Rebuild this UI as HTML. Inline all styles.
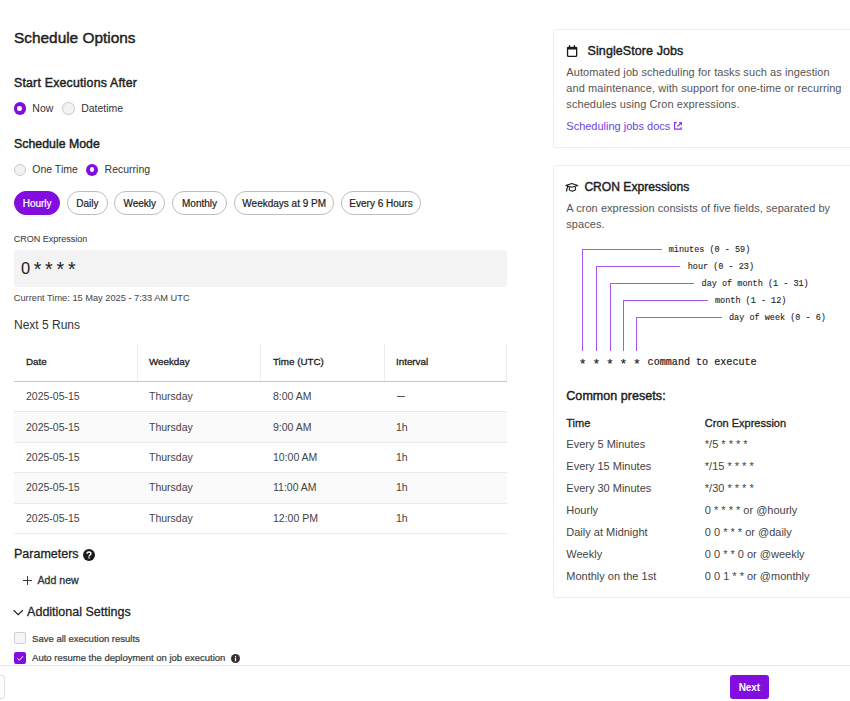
<!DOCTYPE html>
<html><head><meta charset="utf-8"><style>
html,body{margin:0;padding:0;background:#fff;width:850px;height:701px;overflow:hidden;}
body{position:relative;font-family:'Liberation Sans',sans-serif;}
.t{position:absolute;white-space:pre;line-height:1;}
.r{position:absolute;}
.chip{position:absolute;top:191.2px;height:23.8px;box-sizing:border-box;border:1px solid #bdbdbd;border-radius:12px;background:#fff;color:#1b1b1b;font:400 10px/24px 'Liberation Sans';text-align:center;-webkit-text-stroke:0.2px #1b1b1b;}
.chip.on{background:#820ddf;border-color:#820ddf;color:#fff;-webkit-text-stroke:0.2px #fff;}
</style></head><body>
<div class="t" style="left:14px;top:30.46px;font-size:15.4px;font-weight:400;color:#1f1f1f;letter-spacing:0px;font-family:'Liberation Sans';-webkit-text-stroke:0.45px #1f1f1f;">Schedule Options</div>
<div class="t" style="left:14px;top:77.49px;font-size:12.3px;font-weight:400;color:#1f1f1f;letter-spacing:0.22px;font-family:'Liberation Sans';-webkit-text-stroke:0.45px #1f1f1f;">Start Executions After</div>
<div class="r" style="left:13.5px;top:102.3px;width:12.4px;height:12.4px;border-radius:50%;background:#820ddf;"></div>
<div class="r" style="left:17.4px;top:106.2px;width:4.6px;height:4.6px;border-radius:50%;background:#fff;"></div>
<div class="t" style="left:32.3px;top:102.91px;font-size:10.5px;font-weight:400;color:#333;letter-spacing:0px;font-family:'Liberation Sans';">Now</div>
<div class="r" style="left:62.3px;top:102.3px;width:12.4px;height:12.4px;border-radius:50%;background:#f2f2f2;box-sizing:border-box;border:1px solid #cacaca;"></div>
<div class="t" style="left:81.2px;top:102.91px;font-size:10.5px;font-weight:400;color:#333;letter-spacing:0px;font-family:'Liberation Sans';">Datetime</div>
<div class="t" style="left:14px;top:138.39px;font-size:12.3px;font-weight:400;color:#1f1f1f;letter-spacing:0.03px;font-family:'Liberation Sans';-webkit-text-stroke:0.45px #1f1f1f;">Schedule Mode</div>
<div class="r" style="left:13.600000000000001px;top:163.5px;width:12.4px;height:12.4px;border-radius:50%;background:#f2f2f2;box-sizing:border-box;border:1px solid #cacaca;"></div>
<div class="t" style="left:32.3px;top:164.41px;font-size:10.5px;font-weight:400;color:#333;letter-spacing:0px;font-family:'Liberation Sans';">One Time</div>
<div class="r" style="left:85.89999999999999px;top:163.5px;width:12.4px;height:12.4px;border-radius:50%;background:#820ddf;"></div>
<div class="r" style="left:89.8px;top:167.39999999999998px;width:4.6px;height:4.6px;border-radius:50%;background:#fff;"></div>
<div class="t" style="left:104.6px;top:164.41px;font-size:10.5px;font-weight:400;color:#333;letter-spacing:0px;font-family:'Liberation Sans';">Recurring</div>
<div class="chip on" style="left:13.8px;width:46.7px;">Hourly</div>
<div class="chip" style="left:67px;width:40.6px;">Daily</div>
<div class="chip" style="left:114.4px;width:50.8px;">Weekly</div>
<div class="chip" style="left:171.8px;width:55.5px;">Monthly</div>
<div class="chip" style="left:233.9px;width:100.6px;">Weekdays at 9 PM</div>
<div class="chip" style="left:340.7px;width:80.7px;">Every 6 Hours</div>
<div class="t" style="left:13.8px;top:235.18px;font-size:9px;font-weight:400;color:#444;letter-spacing:0px;font-family:'Liberation Sans';-webkit-text-stroke:0.08px #444;">CRON Expression</div>
<div class="r" style="left:13.8px;top:250.2px;width:493.2px;height:36.8px;background:#f3f3f3;border-radius:3px;"></div>
<div class="t" style="left:20.9px;top:260.03px;font-size:16.5px;font-weight:400;color:#222;letter-spacing:0px;font-family:'Liberation Sans';">0</div>
<div class="t" style="left:33.8px;top:259.79px;font-size:19.5px;font-weight:400;color:#222;letter-spacing:0px;font-family:'Liberation Sans';">*</div>
<div class="t" style="left:45.1px;top:259.79px;font-size:19.5px;font-weight:400;color:#222;letter-spacing:0px;font-family:'Liberation Sans';">*</div>
<div class="t" style="left:56.4px;top:259.79px;font-size:19.5px;font-weight:400;color:#222;letter-spacing:0px;font-family:'Liberation Sans';">*</div>
<div class="t" style="left:68.0px;top:259.79px;font-size:19.5px;font-weight:400;color:#222;letter-spacing:0px;font-family:'Liberation Sans';">*</div>
<div class="t" style="left:13.8px;top:293.67px;font-size:9.25px;font-weight:400;color:#4a4a4a;letter-spacing:0px;font-family:'Liberation Sans';-webkit-text-stroke:0.05px #4a4a4a;">Current Time: 15 May 2025 - 7:33 AM UTC</div>
<div class="t" style="left:14px;top:318.64px;font-size:12px;font-weight:400;color:#333;letter-spacing:0px;font-family:'Liberation Sans';">Next 5 Runs</div>
<div class="r" style="left:13.8px;top:343.5px;width:493.2px;height:37.5px;background:#fff;"></div>
<div class="r" style="left:137px;top:343.5px;width:1px;height:37.5px;background:#ececec;"></div>
<div class="r" style="left:260px;top:343.5px;width:1px;height:37.5px;background:#ececec;"></div>
<div class="r" style="left:384px;top:343.5px;width:1px;height:37.5px;background:#ececec;"></div>
<div class="r" style="left:506px;top:343.5px;width:1px;height:37.5px;background:#ececec;"></div>
<div class="r" style="left:13.8px;top:380.6px;width:493.2px;height:1.5px;background:#c3c4d2;"></div>
<div class="t" style="left:26px;top:357.10px;font-size:9.8px;font-weight:400;color:#222;letter-spacing:0px;font-family:'Liberation Sans';-webkit-text-stroke:0.3px #222;">Date</div>
<div class="t" style="left:149px;top:357.10px;font-size:9.8px;font-weight:400;color:#222;letter-spacing:0px;font-family:'Liberation Sans';-webkit-text-stroke:0.3px #222;">Weekday</div>
<div class="t" style="left:273px;top:357.10px;font-size:9.8px;font-weight:400;color:#222;letter-spacing:0px;font-family:'Liberation Sans';-webkit-text-stroke:0.3px #222;">Time (UTC)</div>
<div class="t" style="left:396px;top:357.10px;font-size:9.8px;font-weight:400;color:#222;letter-spacing:0px;font-family:'Liberation Sans';-webkit-text-stroke:0.3px #222;">Interval</div>
<div class="r" style="left:13.8px;top:411.4px;width:493.2px;height:1px;background:#e9e9ee;"></div>
<div class="t" style="left:26px;top:391.11px;font-size:10.5px;font-weight:400;color:#444;letter-spacing:0px;font-family:'Liberation Sans';">2025-05-15</div>
<div class="t" style="left:149px;top:391.11px;font-size:10.5px;font-weight:400;color:#444;letter-spacing:0px;font-family:'Liberation Sans';">Thursday</div>
<div class="t" style="left:273px;top:391.11px;font-size:10.5px;font-weight:400;color:#444;letter-spacing:0px;font-family:'Liberation Sans';">8:00 AM</div>
<div class="t" style="left:396px;top:391.11px;font-size:10.5px;font-weight:400;color:#444;letter-spacing:0px;font-family:'Liberation Sans';"></div>
<div class="r" style="left:13.8px;top:412.4px;width:493.2px;height:30.4px;background:#fafafa;"></div>
<div class="r" style="left:13.8px;top:441.79999999999995px;width:493.2px;height:1px;background:#e9e9ee;"></div>
<div class="t" style="left:26px;top:421.51px;font-size:10.5px;font-weight:400;color:#444;letter-spacing:0px;font-family:'Liberation Sans';">2025-05-15</div>
<div class="t" style="left:149px;top:421.51px;font-size:10.5px;font-weight:400;color:#444;letter-spacing:0px;font-family:'Liberation Sans';">Thursday</div>
<div class="t" style="left:273px;top:421.51px;font-size:10.5px;font-weight:400;color:#444;letter-spacing:0px;font-family:'Liberation Sans';">9:00 AM</div>
<div class="t" style="left:396px;top:421.51px;font-size:10.5px;font-weight:400;color:#444;letter-spacing:0px;font-family:'Liberation Sans';">1h</div>
<div class="r" style="left:13.8px;top:472.2px;width:493.2px;height:1px;background:#e9e9ee;"></div>
<div class="t" style="left:26px;top:451.91px;font-size:10.5px;font-weight:400;color:#444;letter-spacing:0px;font-family:'Liberation Sans';">2025-05-15</div>
<div class="t" style="left:149px;top:451.91px;font-size:10.5px;font-weight:400;color:#444;letter-spacing:0px;font-family:'Liberation Sans';">Thursday</div>
<div class="t" style="left:273px;top:451.91px;font-size:10.5px;font-weight:400;color:#444;letter-spacing:0px;font-family:'Liberation Sans';">10:00 AM</div>
<div class="t" style="left:396px;top:451.91px;font-size:10.5px;font-weight:400;color:#444;letter-spacing:0px;font-family:'Liberation Sans';">1h</div>
<div class="r" style="left:13.8px;top:473.2px;width:493.2px;height:30.4px;background:#fafafa;"></div>
<div class="r" style="left:13.8px;top:502.59999999999997px;width:493.2px;height:1px;background:#e9e9ee;"></div>
<div class="t" style="left:26px;top:482.31px;font-size:10.5px;font-weight:400;color:#444;letter-spacing:0px;font-family:'Liberation Sans';">2025-05-15</div>
<div class="t" style="left:149px;top:482.31px;font-size:10.5px;font-weight:400;color:#444;letter-spacing:0px;font-family:'Liberation Sans';">Thursday</div>
<div class="t" style="left:273px;top:482.31px;font-size:10.5px;font-weight:400;color:#444;letter-spacing:0px;font-family:'Liberation Sans';">11:00 AM</div>
<div class="t" style="left:396px;top:482.31px;font-size:10.5px;font-weight:400;color:#444;letter-spacing:0px;font-family:'Liberation Sans';">1h</div>
<div class="r" style="left:13.8px;top:533.0px;width:493.2px;height:1px;background:#e9e9ee;"></div>
<div class="t" style="left:26px;top:512.71px;font-size:10.5px;font-weight:400;color:#444;letter-spacing:0px;font-family:'Liberation Sans';">2025-05-15</div>
<div class="t" style="left:149px;top:512.71px;font-size:10.5px;font-weight:400;color:#444;letter-spacing:0px;font-family:'Liberation Sans';">Thursday</div>
<div class="t" style="left:273px;top:512.71px;font-size:10.5px;font-weight:400;color:#444;letter-spacing:0px;font-family:'Liberation Sans';">12:00 PM</div>
<div class="t" style="left:396px;top:512.71px;font-size:10.5px;font-weight:400;color:#444;letter-spacing:0px;font-family:'Liberation Sans';">1h</div>
<div class="r" style="left:396.5px;top:396px;width:8px;height:1.1px;background:#555;"></div>
<div class="t" style="left:14px;top:547.62px;font-size:12.5px;font-weight:400;color:#1f1f1f;letter-spacing:0px;font-family:'Liberation Sans';-webkit-text-stroke:0.3px #1f1f1f;">Parameters</div>
<svg class="r" style="left:83.3px;top:548.7px;" width="12" height="12" viewBox="0 0 12 12"><circle cx="6" cy="6" r="6" fill="#1b1b1b"/><path d="M4.05 4.7 Q4.05 3 6 3 Q7.95 3 7.95 4.6 Q7.95 5.6 6.9 6.1 Q6.05 6.5 6.05 7.4" stroke="#fff" stroke-width="1.35" fill="none"/><rect x="5.35" y="8.1" width="1.4" height="1.35" fill="#fff"/></svg>
<div class="r" style="left:23px;top:580px;width:8.7px;height:1.2px;background:#3a3a3a;"></div>
<div class="r" style="left:27px;top:576.4px;width:1.2px;height:8.3px;background:#3a3a3a;"></div>
<div class="t" style="left:37.5px;top:575.43px;font-size:10.6px;font-weight:400;color:#333;letter-spacing:0px;font-family:'Liberation Sans';-webkit-text-stroke:0.3px #333;">Add new</div>
<svg class="r" style="left:13px;top:606px;" width="11" height="11" viewBox="0 0 11 11"><path d="M0.6 4.1 L5.2 8.7 L9.8 4.1" fill="none" stroke="#1b1b1b" stroke-width="1.3"/></svg>
<div class="t" style="left:27.1px;top:605.92px;font-size:12.5px;font-weight:400;color:#1f1f1f;letter-spacing:0px;font-family:'Liberation Sans';-webkit-text-stroke:0.3px #1f1f1f;">Additional Settings</div>
<div class="r" style="left:13.7px;top:631.9px;width:12.2px;height:11.8px;box-sizing:border-box;border:1px solid #cfcfcf;background:#f5f5f5;border-radius:2px;"></div>
<div class="t" style="left:32.1px;top:633.66px;font-size:9.5px;font-weight:400;color:#3a3a3a;letter-spacing:0px;font-family:'Liberation Sans';-webkit-text-stroke:0.22px #3a3a3a;">Save all execution results</div>
<div class="r" style="left:13.7px;top:651.6px;width:12.2px;height:12px;background:#820ddf;border-radius:2px;"></div>
<svg class="r" style="left:13.7px;top:651.6px;" width="12.2" height="12" viewBox="0 0 12 12"><path d="M3.3 6.3 L5.3 8.2 L8.9 4.2" fill="none" stroke="#fff" stroke-width="1"/></svg>
<div class="t" style="left:32.1px;top:652.86px;font-size:9.5px;font-weight:400;color:#3a3a3a;letter-spacing:0px;font-family:'Liberation Sans';-webkit-text-stroke:0.22px #3a3a3a;">Auto resume the deployment on job execution</div>
<svg class="r" style="left:230.7px;top:653.9px;" width="9" height="9" viewBox="0 0 9 9"><circle cx="4.5" cy="4.5" r="4.5" fill="#333"/><rect x="3.9" y="3.6" width="1.2" height="3.6" fill="#fff"/><rect x="3.9" y="1.9" width="1.2" height="1.1" fill="#fff"/></svg>
<div class="r" style="left:0px;top:665px;width:850px;height:1px;background:#e6e6e6;"></div>
<div class="r" style="left:-20px;top:675.2px;width:25px;height:23.5px;box-sizing:border-box;border:1px solid #dedede;border-radius:3px;background:#fff;"></div>
<div class="r" style="left:730.1px;top:674.9px;width:38.6px;height:23.8px;background:#820ddf;border-radius:3px;color:#fff;font:700 10px/25.6px 'Liberation Sans';letter-spacing:-0.1px;text-align:center;">Next</div>
<div class="r" style="left:553px;top:29px;width:320px;height:118.5px;box-sizing:border-box;border:1px solid #ececec;border-radius:3px;background:#fff;"></div>
<svg class="r" style="left:566px;top:44px;" width="12" height="14" viewBox="0 0 12 14"><rect x="1.55" y="3.45" width="9.1" height="9" rx="0.9" fill="none" stroke="#1b1b1b" stroke-width="1.3"/><rect x="1" y="2.9" width="10.2" height="2.6" rx="0.8" fill="#1b1b1b"/><rect x="2.9" y="1.1" width="1.2" height="2.2" fill="#1b1b1b"/><rect x="7.8" y="1.1" width="1.2" height="2.2" fill="#1b1b1b"/></svg>
<div class="t" style="left:587.6px;top:44.52px;font-size:12.5px;font-weight:400;color:#1f1f1f;letter-spacing:0.08px;font-family:'Liberation Sans';-webkit-text-stroke:0.45px #1f1f1f;">SingleStore Jobs</div>
<div class="t" style="left:566.3px;top:66.79px;font-size:11px;font-weight:400;color:#555;letter-spacing:0.08px;font-family:'Liberation Sans';">Automated job scheduling for tasks such as ingestion</div>
<div class="t" style="left:566.3px;top:82.79px;font-size:11px;font-weight:400;color:#555;letter-spacing:0.08px;font-family:'Liberation Sans';">and maintenance, with support for one-time or recurring</div>
<div class="t" style="left:566.3px;top:98.79px;font-size:11px;font-weight:400;color:#555;letter-spacing:0.08px;font-family:'Liberation Sans';">schedules using Cron expressions.</div>
<div class="t" style="left:566.3px;top:120.99px;font-size:11px;font-weight:400;color:#6a45dc;letter-spacing:0px;font-family:'Liberation Sans';">Scheduling jobs docs</div>
<svg class="r" style="left:673px;top:121px;" width="10" height="10" viewBox="0 0 10 10"><path d="M3.8 1.6 H1.6 V8.2 H8.2 V6.2" fill="none" stroke="#9a2ee6" stroke-width="1.2"/><path d="M5.6 1.2 H8.8 V4.4 Z" fill="#7a10d8"/><path d="M8.2 1.8 L4.4 5.6" fill="none" stroke="#8a20e0" stroke-width="1.2"/></svg>
<div class="r" style="left:553px;top:165.4px;width:320px;height:432.4px;box-sizing:border-box;border:1px solid #ececec;border-radius:3px;background:#fff;"></div>
<svg class="r" style="left:565px;top:182px;" width="14" height="11" viewBox="0 0 14 11"><path d="M0.9 3.4 L6.8 1.5 L12.8 3.4 L6.8 5.3 Z" fill="none" stroke="#1b1b1b" stroke-width="1.05" stroke-linejoin="round"/><path d="M4.3 4.9 V7.9 Q7.4 10.4 10.4 7.9 V4.9" fill="none" stroke="#1b1b1b" stroke-width="1.05"/><path d="M2.7 4 L1.4 9.5" fill="none" stroke="#1b1b1b" stroke-width="1.1"/></svg>
<div class="t" style="left:584.4px;top:181.16px;font-size:12.1px;font-weight:400;color:#1f1f1f;letter-spacing:0px;font-family:'Liberation Sans';-webkit-text-stroke:0.45px #1f1f1f;">CRON Expressions</div>
<div class="t" style="left:566.3px;top:203.19px;font-size:11px;font-weight:400;color:#555;letter-spacing:0.05px;font-family:'Liberation Sans';">A cron expression consists of five fields, separated by</div>
<div class="t" style="left:566.3px;top:219.19px;font-size:11px;font-weight:400;color:#555;letter-spacing:0.05px;font-family:'Liberation Sans';">spaces.</div>
<div class="r" style="left:582px;top:249px;width:1px;height:102px;background:#a855f7;"></div>
<div class="r" style="left:582px;top:249px;width:80px;height:1px;background:#a855f7;"></div>
<div class="t" style="left:668.7px;top:246.39px;font-size:8.5px;font-weight:400;color:#222;letter-spacing:0px;font-family:'Liberation Mono';-webkit-text-stroke:0.1px #222;">minutes (0 - 59)</div>
<div class="r" style="left:596px;top:266px;width:1px;height:85px;background:#a855f7;"></div>
<div class="r" style="left:596px;top:266px;width:84px;height:1px;background:#a855f7;"></div>
<div class="t" style="left:687.7px;top:263.49px;font-size:8.5px;font-weight:400;color:#222;letter-spacing:0px;font-family:'Liberation Mono';-webkit-text-stroke:0.1px #222;">hour (0 - 23)</div>
<div class="r" style="left:610px;top:283px;width:1px;height:68px;background:#a855f7;"></div>
<div class="r" style="left:610px;top:283px;width:84px;height:1px;background:#a855f7;"></div>
<div class="t" style="left:701.6px;top:280.29px;font-size:8.5px;font-weight:400;color:#222;letter-spacing:0px;font-family:'Liberation Mono';-webkit-text-stroke:0.1px #222;">day of month (1 - 31)</div>
<div class="r" style="left:623px;top:300px;width:1px;height:51px;background:#a855f7;"></div>
<div class="r" style="left:623px;top:300px;width:85px;height:1px;background:#a855f7;"></div>
<div class="t" style="left:715px;top:296.99px;font-size:8.5px;font-weight:400;color:#222;letter-spacing:0px;font-family:'Liberation Mono';-webkit-text-stroke:0.1px #222;">month (1 - 12)</div>
<div class="r" style="left:636px;top:317px;width:1px;height:34px;background:#a855f7;"></div>
<div class="r" style="left:636px;top:317px;width:86px;height:1px;background:#a855f7;"></div>
<div class="t" style="left:729px;top:314.19px;font-size:8.5px;font-weight:400;color:#222;letter-spacing:0px;font-family:'Liberation Mono';-webkit-text-stroke:0.1px #222;">day of week (0 - 6)</div>
<div class="t" style="left:578.8000000000001px;top:358.24px;font-size:13px;font-weight:400;color:#222;letter-spacing:0px;font-family:'Liberation Mono';-webkit-text-stroke:0.2px #222;">*</div>
<div class="t" style="left:592.6px;top:358.24px;font-size:13px;font-weight:400;color:#222;letter-spacing:0px;font-family:'Liberation Mono';-webkit-text-stroke:0.2px #222;">*</div>
<div class="t" style="left:606.1px;top:358.24px;font-size:13px;font-weight:400;color:#222;letter-spacing:0px;font-family:'Liberation Mono';-webkit-text-stroke:0.2px #222;">*</div>
<div class="t" style="left:619.6px;top:358.24px;font-size:13px;font-weight:400;color:#222;letter-spacing:0px;font-family:'Liberation Mono';-webkit-text-stroke:0.2px #222;">*</div>
<div class="t" style="left:633.1px;top:358.24px;font-size:13px;font-weight:400;color:#222;letter-spacing:0px;font-family:'Liberation Mono';-webkit-text-stroke:0.2px #222;">*</div>
<div class="t" style="left:647.6px;top:357.96px;font-size:10.1px;font-weight:400;color:#222;letter-spacing:0px;font-family:'Liberation Mono';-webkit-text-stroke:0.2px #222;">command to execute</div>
<div class="t" style="left:566.3px;top:389.92px;font-size:12.5px;font-weight:400;color:#1f1f1f;letter-spacing:0.05px;font-family:'Liberation Sans';-webkit-text-stroke:0.45px #1f1f1f;">Common presets:</div>
<div class="t" style="left:566.3px;top:417.99px;font-size:11px;font-weight:400;color:#222;letter-spacing:0px;font-family:'Liberation Sans';-webkit-text-stroke:0.3px #222;">Time</div>
<div class="t" style="left:704.8px;top:417.99px;font-size:11px;font-weight:400;color:#222;letter-spacing:0px;font-family:'Liberation Sans';-webkit-text-stroke:0.3px #222;">Cron Expression</div>
<div class="t" style="left:566.3px;top:439.09px;font-size:11px;font-weight:400;color:#444;letter-spacing:0px;font-family:'Liberation Sans';">Every 5 Minutes</div>
<div class="t" style="left:704.8px;top:439.09px;font-size:11px;font-weight:400;color:#444;letter-spacing:0px;font-family:'Liberation Sans';">*/5 * * * *</div>
<div class="t" style="left:566.3px;top:460.99px;font-size:11px;font-weight:400;color:#444;letter-spacing:0px;font-family:'Liberation Sans';">Every 15 Minutes</div>
<div class="t" style="left:704.8px;top:460.99px;font-size:11px;font-weight:400;color:#444;letter-spacing:0px;font-family:'Liberation Sans';">*/15 * * * *</div>
<div class="t" style="left:566.3px;top:482.89px;font-size:11px;font-weight:400;color:#444;letter-spacing:0px;font-family:'Liberation Sans';">Every 30 Minutes</div>
<div class="t" style="left:704.8px;top:482.89px;font-size:11px;font-weight:400;color:#444;letter-spacing:0px;font-family:'Liberation Sans';">*/30 * * * *</div>
<div class="t" style="left:566.3px;top:504.69px;font-size:11px;font-weight:400;color:#444;letter-spacing:0px;font-family:'Liberation Sans';">Hourly</div>
<div class="t" style="left:704.8px;top:504.69px;font-size:11px;font-weight:400;color:#444;letter-spacing:0px;font-family:'Liberation Sans';">0 * * * * or @hourly</div>
<div class="t" style="left:566.3px;top:526.69px;font-size:11px;font-weight:400;color:#444;letter-spacing:0px;font-family:'Liberation Sans';">Daily at Midnight</div>
<div class="t" style="left:704.8px;top:526.69px;font-size:11px;font-weight:400;color:#444;letter-spacing:0px;font-family:'Liberation Sans';">0 0 * * * or @daily</div>
<div class="t" style="left:566.3px;top:548.89px;font-size:11px;font-weight:400;color:#444;letter-spacing:0px;font-family:'Liberation Sans';">Weekly</div>
<div class="t" style="left:704.8px;top:548.89px;font-size:11px;font-weight:400;color:#444;letter-spacing:0px;font-family:'Liberation Sans';">0 0 * * 0 or @weekly</div>
<div class="t" style="left:566.3px;top:571.09px;font-size:11px;font-weight:400;color:#444;letter-spacing:0px;font-family:'Liberation Sans';">Monthly on the 1st</div>
<div class="t" style="left:704.8px;top:571.09px;font-size:11px;font-weight:400;color:#444;letter-spacing:0px;font-family:'Liberation Sans';">0 0 1 * * or @monthly</div>
</body></html>
